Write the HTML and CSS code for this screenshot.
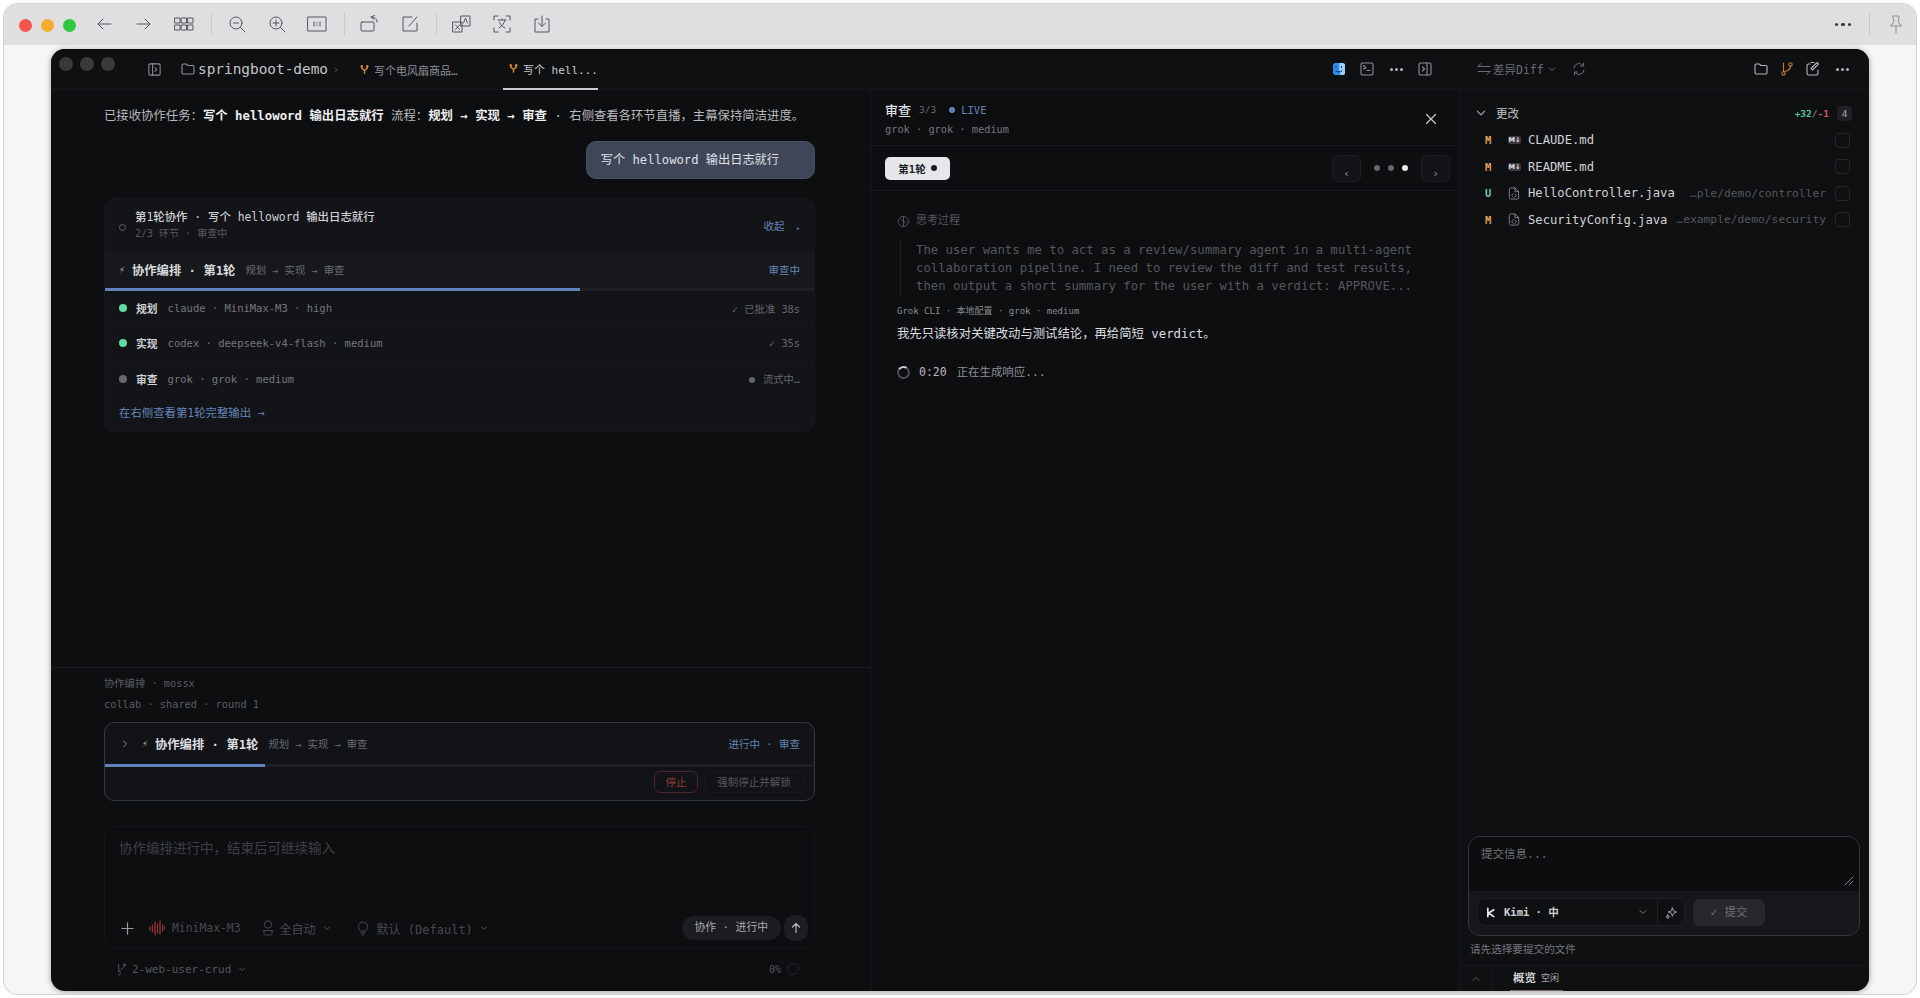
FILE: index.html
```html
<!DOCTYPE html>
<html lang="zh-CN">
<head>
  <meta charset="UTF-8">
  <title>springboot-demo</title>
  <link rel="stylesheet" href="styles.css">
</head>
<body>
  <div class="window">
    <div class="toolbar">
      <span class="light red"></span><span class="light yellow"></span><span class="light green"></span>
      <svg class="tool first" viewBox="0 0 20 20"><path d="M17 10H4M9 5l-5 5 5 5"/></svg>
      <svg class="tool" viewBox="0 0 20 20"><path d="M3 10h13M11 5l5 5-5 5"/></svg>
      <svg class="tool" viewBox="0 0 20 20"><path d="M1 4h5v5H1zM7.500 4h5v5h-5zM14 4h5v5h-5zM1 11h5v5H1zM7.500 11h5v5h-5zM14 11h5v5h-5z"/></svg>
      <span class="tool-sep"></span>
      <svg class="tool" viewBox="0 0 20 20"><circle cx="9" cy="9" r="6"/><path d="M13.500 13.500L18 18M6.500 9h5"/></svg>
      <svg class="tool" viewBox="0 0 20 20"><circle cx="9" cy="9" r="6"/><path d="M13.500 13.500L18 18M6 9h6M9 6v6"/></svg>
      <svg class="tool" viewBox="0 0 20 20"><rect x="1" y="3" width="18" height="14"/><path d="M7 8v4M13 8v4M10 8.500v.5M10 11v.5"/></svg>
      <span class="tool-sep"></span>
      <svg class="tool" viewBox="0 0 20 20"><rect x="1" y="8" width="13" height="9" rx="1"/><path d="M11 3c3 0 6 1 6 5M14.500 1.500L11 3l3 2.500"/></svg>
      <svg class="tool narrow" viewBox="0 0 20 20"><path d="M17 9v8H3V3h9M9 12l8-9"/></svg>
      <span class="tool-sep"></span>
      <svg class="tool" viewBox="0 0 20 20"><rect x="1" y="8" width="9" height="10"/><rect x="9" y="2" width="9" height="10"/><path d="M3.500 11l4 4.500M7.500 11l-4 4.500M11.500 9l2-5 2 5"/></svg>
      <svg class="tool" viewBox="0 0 20 20"><path d="M2 6V2h4M14 2h4v4M18 14v4h-4M6 18H2v-4M6 6h8M10 5v1M7 14c3-2 5-4 6-8M7.500 8c1 3 3 5 5.500 6"/></svg>
      <svg class="tool" viewBox="0 0 20 20"><path d="M6 5H3v13h14V5h-3M10 2v10M6.500 9l3.500 3.500L13.500 9"/></svg>
      <span class="toolbar-gap"></span>
      <span class="tool-dots"><i></i><i></i><i></i></span>
      <span class="tool-sep end"></span>
      <svg class="tool pin" viewBox="0 0 20 20"><path d="M7 2h6l-.7 6 3.200 4H4.500l3.200-4zM10 12v7"/></svg>
    </div>

    <div class="app">
      <div class="main">
        <header class="topbar">
          <span class="dark-light"></span><span class="dark-light"></span><span class="dark-light"></span>
          <svg class="ico sidebar-ico" viewBox="0 0 16 16"><rect x="2" y="2" width="12" height="12" rx="1.500"/><path d="M6 2v12M8.500 6l2 2-2 2"/></svg>
          <svg class="ico folder-ico" viewBox="0 0 16 16"><path d="M2 4.500c0-.8.500-1.500 1.300-1.500h3L8 4.500h5c.6 0 1 .5 1 1v6c0 .8-.5 1.500-1.300 1.500H3.300C2.500 13 2 12.300 2 11.500z"/></svg>
          <span class="project">springboot-demo</span>
          <span class="crumb">›</span>
          <span class="tab">
            <svg class="fork" viewBox="0 0 12 12"><path d="M3 3v1.500L6 7l3-2.500V3M6 7v3"/><circle class="fork-tip" cx="3" cy="2.500" r="1.300"/><circle class="fork-tip" cx="9" cy="2.500" r="1.300"/></svg>
            <span>写个电风扇商品…</span>
          </span>
          <span class="tab active">
            <svg class="fork" viewBox="0 0 12 12"><path d="M3 3v1.500L6 7l3-2.500V3M6 7v3"/><circle class="fork-tip" cx="3" cy="2.500" r="1.300"/><circle class="fork-tip" cx="9" cy="2.500" r="1.300"/></svg>
            <span>写个 hell...</span>
          </span>
          <span class="topbar-gap"></span>
          <svg class="finder" viewBox="0 0 12 12"><rect width="12" height="12" rx="2.500" fill="#2f8cf0"/><path d="M6.500 0H9.500A2.500 2.500 0 0 1 12 2.500v7A2.500 2.500 0 0 1 9.500 12H7.500C6.500 9 6 4 6.500 0z" fill="#9fd0fa"/><path d="M3 3.500v1M8.500 3.500v1M3 8c2 1.300 4 1.300 6 0" stroke="#10335c" fill="none"/></svg>
          <svg class="ico term-ico" viewBox="0 0 16 16"><rect x="2" y="2" width="12" height="12" rx="1.500"/><path d="M4.500 4.500L7 7 4.500 8M8 9.500h3"/></svg>
          <span class="dots top-dots"><i></i><i></i><i></i></span>
          <svg class="ico panel-ico" viewBox="0 0 16 16"><rect x="2" y="2" width="12" height="12" rx="1.500"/><path d="M10 2v12M5.500 6l2 2-2 2"/></svg>
        </header>

        <div class="panes">
          <section class="left">
            <div class="log">
              <p class="notice">已接收协作任务：<b>写个 helloword 输出日志就行</b> 流程：<b>规划 → 实现 → 审查</b> · 右侧查看各环节直播，主幕保持简洁进度。</p>
              <div class="bubble-row"><div class="bubble">写个 helloword 输出日志就行</div></div>

              <div class="card">
                <div class="card-head">
                  <span class="ring"></span>
                  <div class="card-titles">
                    <div class="card-title">第1轮协作 · 写个 helloword 输出日志就行</div>
                    <div class="card-sub">2/3 环节 · 审查中</div>
                  </div>
                  <span class="link-blue collapse">收起 <small>▴</small></span>
                </div>
                <div class="orch">
                  <span class="bolt">⚡︎</span>
                  <b>协作编排 · 第1轮</b>
                  <span class="flow">规划 → 实现 → 审查</span>
                  <span class="link-blue end">审查中</span>
                </div>
                <div class="bar"><div class="bar-fill" style="width: 67%"></div></div>
                <div class="step">
                  <span class="dot ok"></span><b>规划</b><span class="step-meta">claude · MiniMax-M3 · high</span>
                  <span class="step-state">✓ 已批准 38s</span>
                </div>
                <div class="step">
                  <span class="dot ok"></span><b>实现</b><span class="step-meta">codex · deepseek-v4-flash · medium</span>
                  <span class="step-state">✓ 35s</span>
                </div>
                <div class="step last">
                  <span class="dot wait"></span><b>审查</b><span class="step-meta">grok · grok · medium</span>
                  <span class="step-state"><span class="mini-dot"></span> 流式中…</span>
                </div>
                <div class="card-link link-blue">在右侧查看第1轮完整输出 →</div>
              </div>
            </div>

            <div class="lower">
              <div class="lower-meta">协作编排 · mossx</div>
              <div class="lower-meta second">collab · shared · round 1</div>

              <div class="run-box">
                <div class="run-head">
                  <svg class="chev-r" viewBox="0 0 10 10"><path d="M3.500 2l3 3-3 3"/></svg>
                  <span class="bolt">⚡︎</span>
                  <b>协作编排 · 第1轮</b>
                  <span class="flow">规划 → 实现 → 审查</span>
                  <span class="link-blue end">进行中 · 审查</span>
                </div>
                <div class="bar run-bar"><div class="bar-fill" style="width: 22.600%"></div></div>
                <div class="run-actions">
                  <span class="btn-stop">停止</span>
                  <span class="btn-force">强制停止并解锁</span>
                </div>
              </div>

              <div class="composer">
                <div class="placeholder">协作编排进行中，结束后可继续输入</div>
                <div class="composer-bar">
                  <svg class="plus" viewBox="0 0 14 14"><path d="M7 1v12M1 7h12"/></svg>
                  <svg class="wave" viewBox="0 0 16 16"><path d="M1 7v3M3.500 5v7M6 2v13M8.500 4v9M11 1v13M13.500 5v6M15.500 7v2"/></svg>
                  <span class="opt model">MiniMax-M3</span>
                  <svg class="ico-sm robot" viewBox="0 0 14 16"><rect x="3.500" y="1" width="7" height="7" rx="3"/><path d="M2 10.500h10M3 10.500v3c0 1 .5 1.500 1.500 1.500h5c1 0 1.500-.5 1.500-1.500v-3"/></svg>
                  <span class="opt cjk">全自动</span>
                  <svg class="chev-d" viewBox="0 0 10 10"><path d="M2.500 4l2.500 2.500L7.500 4"/></svg>
                  <svg class="ico-sm bulb" viewBox="0 0 14 16"><path d="M4.500 11C3 9.500 2.500 8.500 2.500 6.500a4.500 4.500 0 0 1 9 0c0 2-.5 3-2 4.500zM5 13h4M6 15h2"/></svg>
                  <span class="opt cjk">默认 (Default)</span>
                  <svg class="chev-d" viewBox="0 0 10 10"><path d="M2.500 4l2.500 2.500L7.500 4"/></svg>
                  <span class="composer-gap"></span>
                  <span class="mode">协作 · 进行中</span>
                  <span class="send"><svg viewBox="0 0 12 12"><path d="M6 10.500v-9M2.500 5L6 1.500 9.500 5"/></svg></span>
                </div>
              </div>

              <div class="status">
                <svg class="branch" viewBox="0 0 14 14"><path d="M4 1.500v7M10 1.500c.5 3-1 4.500-5 6M4 9a2 2 0 1 1-.1 4"/><circle cx="10" cy="2" r="1"/></svg>
                <span>2-web-user-crud</span>
                <svg class="chev-d" viewBox="0 0 10 10"><path d="M2.500 4l2.500 2.500L7.500 4"/></svg>
                <span class="status-pct">0%</span>
                <span class="status-ring"></span>
              </div>
            </div>
          </section>

          <section class="mid">
            <div class="mid-head">
              <div>
                <div class="mid-title"><b>审查</b><span class="count">3/3</span><span class="live"><i></i>LIVE</span></div>
                <div class="mid-sub">grok · grok · medium</div>
              </div>
              <svg class="close" viewBox="0 0 12 12"><path d="M1.500 1.500l9 9M10.500 1.500l-9 9"/></svg>
            </div>
            <div class="round-bar">
              <span class="chip">第1轮<i></i></span>
              <span class="nav">‹</span>
              <span class="pager"><i></i><i></i><i class="on"></i></span>
              <span class="nav">›</span>
            </div>
            <div class="stream">
              <div class="think-head">
                <svg viewBox="0 0 14 14"><circle cx="7" cy="7" r="5.500"/><path d="M7 1.500v11M7 7L4.500 5M7 9.500l2.500-2.500"/></svg>
                思考过程
              </div>
              <blockquote class="think">The user wants me to act as a review/summary agent in a multi-agent collaboration pipeline. I need to review the diff and test results, then output a short summary for the user with a verdict: APPROVE...</blockquote>
              <div class="answer-meta">Grok CLI · 本地配置 · grok · medium</div>
              <div class="answer">我先只读核对关键改动与测试结论，再给简短 verdict。</div>
              <div class="progress"><span class="spinner"></span><span class="time">0:20</span><span>正在生成响应...</span></div>
            </div>
          </section>
        </div>
      </div>

      <aside class="right">
        <div class="right-head">
          <svg class="ico-sm swap" viewBox="0 0 14 14"><path d="M1 4.500h12M4 1.500l-3 3M13 9.500H1M10 12.500l3-3"/></svg>
          <span class="diff-label">差异Diff</span>
          <svg class="chev-d" viewBox="0 0 10 10"><path d="M2.500 4l2.500 2.500L7.500 4"/></svg>
          <svg class="ico-sm refresh" viewBox="0 0 14 14"><path d="M2 6a5 5 0 0 1 9-2.500M12 8a5 5 0 0 1-9 2.500M11.500 1v3h-3M2.500 13v-3h3"/></svg>
          <span class="right-gap"></span>
          <svg class="ico folder2" viewBox="0 0 16 16"><path d="M2 4.500c0-.8.500-1.500 1.300-1.500h3L8 4.500h5c.6 0 1 .5 1 1v6c0 .8-.5 1.500-1.300 1.500H3.300C2.500 13 2 12.300 2 11.500z"/></svg>
          <svg class="ico branch2" viewBox="0 0 16 16"><circle cx="4.500" cy="12.500" r="1.700"/><circle cx="11.500" cy="3.500" r="1.700"/><path d="M4.500 2v8.800M11.500 5.200c0 3.500-3 5-7 5.500"/></svg>
          <svg class="ico edit2" viewBox="0 0 16 16"><path d="M5 3H3.500C2.700 3 2 3.700 2 4.500v8c0 .8.700 1.500 1.500 1.500h8c.8 0 1.500-.7 1.500-1.500V9M6 1.500h3M7.500 9l6-6-1.500-1.500-6 6z"/></svg>
          <span class="dots"><i></i><i></i><i></i></span>
        </div>

        <div class="changes">
          <div class="changes-head">
            <svg class="chev-d big" viewBox="0 0 10 10"><path d="M2 3.500L5 6.500 8 3.500"/></svg>
            <span class="changes-title">更改</span>
            <span class="stat"><span class="add">+32</span>/<span class="del">-1</span></span>
            <span class="badge">4</span>
          </div>
          <div class="file"><span class="st m">M</span><span class="md">M↓</span><span class="name">CLAUDE.md</span><span class="box"></span></div>
          <div class="file"><span class="st m">M</span><span class="md">M↓</span><span class="name">README.md</span><span class="box"></span></div>
          <div class="file"><span class="st u">U</span>
            <svg class="doc" viewBox="0 0 12 14"><path d="M1 2.500C1 1.500 1.500 1 2.500 1H7l4 4v6.500c0 1-.5 1.500-1.500 1.500h-7c-1 0-1.500-.5-1.500-1.500zM7 1v4h4M5 7.500L3.500 9.200 5 11M7 7.500l1.500 1.700L7 11"/></svg>
            <span class="name">HelloController.java</span><span class="path">…ple/demo/controller</span><span class="box"></span></div>
          <div class="file"><span class="st m">M</span>
            <svg class="doc" viewBox="0 0 12 14"><path d="M1 2.500C1 1.500 1.500 1 2.500 1H7l4 4v6.500c0 1-.5 1.500-1.500 1.500h-7c-1 0-1.500-.5-1.500-1.500zM7 1v4h4M5 7.500L3.500 9.200 5 11M7 7.500l1.500 1.700L7 11"/></svg>
            <span class="name">SecurityConfig.java</span><span class="path tight">…example/demo/security</span><span class="box"></span></div>
        </div>

        <div class="commit">
          <div class="commit-box">
            <div class="commit-input">
              提交信息...
              <svg class="grip" viewBox="0 0 10 10"><path d="M1 9l8-8M5 9l4-4"/></svg>
            </div>
            <div class="commit-bar">
              <div class="picker">
                <svg class="kimi" viewBox="0 0 12 12"><path d="M2 1.500v9M8.500 3L3 6.500l5.500 4"/></svg>
                <span class="picker-label">Kimi · 中</span>
                <svg class="chev-d" viewBox="0 0 10 10"><path d="M2 3.500L5 6.500 8 3.500"/></svg>
                <span class="spark"><svg viewBox="0 0 14 14"><path d="M8 2l1.200 3.300L12.500 6.500 9.200 7.700 8 11 6.800 7.700 3.500 6.500 6.800 5.300zM3 9.500l.6 1.400 1.400.6-1.400.6L3 13.500l-.6-1.400-1.400-.6 1.400-.6z"/></svg></span>
              </div>
              <span class="commit-btn">✓ 提交</span>
            </div>
          </div>
          <div class="commit-hint">请先选择要提交的文件</div>
        </div>

        <div class="bottom-tabs">
          <span class="collapse-tab"><svg class="chev-d" viewBox="0 0 10 10"><path d="M2 6.500L5 3.500 8 6.500"/></svg></span>
          <span class="bottom-tab"><b>概览</b><small>空闲</small></span>
        </div>
      </aside>
    </div>
  </div>
</body>
</html>
```

FILE: styles.css
```css
* {
  box-sizing: border-box;
}
html, body {
  margin: 0;
  height: 100%;
  overflow: hidden;
}
body {
  background: #ffffff;
  padding: 3px 3px 3px 3px;
  font-family: "DejaVu Sans Mono", "Noto Sans CJK SC", monospace;
  font-size: 12.200px;
  color: #d9dadd;
}
svg {
  fill: none;
  stroke: currentColor;
  stroke-linecap: round;
  stroke-linejoin: round;
  flex: none;
}
b {
  font-weight: 700;
}

/* outer window */
.window {
  height: 992px;
  border: 1px solid #d4d4d6;
  border-radius: 14px;
  background: #f6f6f6;
  overflow: hidden;
}
.toolbar {
  height: 41px;
  background: #dfdfe1;
  display: flex;
  align-items: center;
  padding: 2px 0 0 15px;
  color: #55565a;
}
.light {
  width: 13px;
  height: 13px;
  border-radius: 50%;
  margin-right: 9px;
}
.red { background: #f5534d; }
.yellow { background: #f6ad2d; }
.green { background: #2ec840; }
.tool {
  width: 20px;
  height: 20px;
  stroke-width: 1;
  margin: -3px 20px 0 0;
}
.tool.first {
  margin-left: 9px;
}
.tool.narrow {
  margin-right: 19px;
}
.tool-sep {
  width: 1px;
  height: 22px;
  background: #c9c9cb;
  margin: -3px 15px 0 -3px;
}
.tool-sep.end {
  margin: -3px 16px 0 18px;
}
.toolbar-gap {
  flex: 1;
}
.tool-dots {
  display: flex;
  gap: 3px;
  margin-top: -2px;
}
.tool-dots i {
  width: 3.500px;
  height: 3.500px;
  border-radius: 50%;
  background: #3a3a3d;
}
.tool.pin {
  color: #8e8e92;
  margin-right: 10px;
}

/* dark app */
.app {
  width: 1818px;
  height: 942px;
  margin: 4px 0 0 47px;
  background: #0d0e10;
  border-radius: 14px;
  overflow: hidden;
  display: flex;
  box-shadow: 0 1px 6px rgba(0,0,0,0.35);
}
.main {
  width: 1409px;
  display: flex;
  flex-direction: column;
}
.topbar {
  height: 41px;
  display: flex;
  align-items: center;
  padding-left: 8px;
  border-bottom: 1px solid #17181b;
  color: #8f9196;
  background: #0f1012;
}
.dark-light {
  width: 14px;
  height: 14px;
  border-radius: 50%;
  background: #3a3a3c;
  margin-right: 7px;
  margin-top: -10px;
}
.ico {
  width: 16px;
  height: 16px;
  stroke-width: 1.100;
}
.sidebar-ico {
  margin-left: 25px;
  width: 15px;
  height: 15px;
}
.folder-ico {
  margin-left: 18px;
}
.project {
  font-size: 14.400px;
  color: #c4c5c9;
  margin-left: 2px;
}
.crumb {
  font-size: 10px;
  color: #55575b;
  margin-left: 5px;
}
.tab {
  height: 41px;
  display: flex;
  align-items: center;
  font-size: 11px;
  color: #909297;
  margin-left: 20px;
  padding: 1px 0 0 0;
  width: 122px;
  white-space: nowrap;
}
.tab.active {
  color: #c9cace;
  border-bottom: 2px solid #c9cace;
  width: 95px;
  margin-left: 22px;
  padding-left: 5px;
}
.fork {
  width: 11px;
  height: 11px;
  color: #d58a2c;
  stroke-width: 1.500;
  margin-right: 4px;
}
.fork-tip {
  fill: currentColor;
  stroke: none;
}
.topbar-gap {
  flex: 1;
}
.finder {
  width: 12px;
  height: 12px;
  stroke: none;
}
.term-ico {
  margin-left: 14px;
}
.dots {
  display: flex;
  gap: 2px;
}
.dots i {
  width: 3px;
  height: 3px;
  border-radius: 50%;
  background: #b0b1b5;
}
.top-dots {
  margin-left: 15px;
}
.panel-ico {
  margin: 0 27px 0 14px;
}
.panes {
  flex: 1;
  display: flex;
  min-height: 0;
}

/* left pane */
.left {
  width: 820px;
  display: flex;
  flex-direction: column;
  border-right: 1px solid #1a1b1e;
}
.log {
  height: 578px;
  padding: 17px 55px 0 53px;
  border-bottom: 1px solid #1a1b1e;
}
.notice {
  margin: 0;
  line-height: 18px;
  font-size: 12.370px;
  color: #b8b9bd;
  white-space: nowrap;
}
.notice b {
  color: #eeeef0;
}
.bubble-row {
  display: flex;
  justify-content: flex-end;
  margin-top: 16px;
}
.bubble {
  height: 38px;
  line-height: 36px;
  padding: 0 35px 0 14px;
  background: #3f4658;
  border: 1px solid #4a5164;
  border-radius: 10px;
  color: #dfe1e6;
}
.card {
  margin-top: 19px;
  height: 234px;
  background: #131417;
  border: 1px solid #17181b;
  border-radius: 10px;
  overflow: hidden;
}
.card-head {
  height: 52px;
  display: flex;
  align-items: center;
  padding: 0 14px;
}
.ring {
  width: 7px;
  height: 7px;
  border-radius: 50%;
  border: 1px solid #5f6166;
  margin-right: 9px;
  margin-top: 4px;
}
.card-title {
  font-size: 11.400px;
  line-height: 16px;
  color: #cfd0d4;
  font-weight: 500;
}
.card-sub {
  font-size: 10px;
  line-height: 16px;
  color: #595b60;
  margin-top: 1px;
}
.link-blue {
  color: #6484b8;
  font-size: 10.500px;
}
.collapse {
  margin-left: auto;
  margin-top: 0;
}
.collapse small {
  font-size: 7px;
  margin-left: 5px;
}
.orch {
  height: 37px;
  background: #17181b;
  display: flex;
  align-items: center;
  padding: 0 14px;
  font-size: 12.300px;
  color: #d8d9dc;
}
.bolt {
  width: 13px;
  font-size: 10px;
  color: #a0a2a6;
}
.flow {
  font-size: 10.300px;
  color: #6b6d72;
  margin-left: 10px;
}
.end {
  margin-left: auto;
}
.bar {
  height: 3px;
  background: #1e1f23;
}
.bar-fill {
  height: 100%;
  background: #6183bd;
}
.step {
  height: 35px;
  display: flex;
  align-items: center;
  padding: 0 14px;
  border-bottom: 1px solid #17181b;
  font-size: 10.800px;
  color: #cfd0d4;
}
.step.last {
  border-bottom: none;
}
.dot {
  width: 8px;
  height: 8px;
  border-radius: 50%;
  margin-right: 9px;
}
.dot.ok { background: #5fdca4; }
.dot.wait { background: #66686d; }
.step-meta {
  font-size: 10.500px;
  color: #74767b;
  margin-left: 10px;
}
.step-state {
  margin-left: auto;
  font-size: 10.300px;
  color: #64666b;
}
.mini-dot {
  display: inline-block;
  width: 6px;
  height: 6px;
  border-radius: 50%;
  background: #64666b;
  margin-right: 2px;
}
.card-link {
  padding: 8px 14px 0;
  font-size: 11.400px;
}

.lower {
  flex: 1;
  padding: 7px 55px 0 53px;
}
.lower-meta {
  font-size: 10.300px;
  line-height: 16px;
  color: #5b5d62;
}
.lower-meta.second {
  margin-top: 5px;
}
.run-box {
  margin-top: 10px;
  height: 79px;
  background: #121317;
  border: 1px solid #333945;
  border-radius: 10px;
  overflow: hidden;
}
.run-head {
  height: 41px;
  display: flex;
  align-items: center;
  padding: 0 14px 0 15px;
  font-size: 12.300px;
  color: #dedfe2;
}
.chev-r {
  width: 10px;
  height: 10px;
  stroke-width: 1;
  color: #8c8e93;
  margin-right: 12px;
}
.run-bar {
  height: 3px;
}
.run-actions {
  display: flex;
  justify-content: flex-end;
  gap: 6px;
  padding: 4px 10px 0;
}
.btn-stop, .btn-force {
  height: 22px;
  line-height: 20px;
  font-size: 10.500px;
  border-radius: 6px;
  text-align: center;
}
.btn-stop {
  width: 44px;
  color: #8c3b3e;
  border: 1px solid #4d2529;
}
.btn-force {
  width: 100px;
  color: #54565b;
  border: 1px solid #191a1d;
}
.composer {
  margin-top: 25px;
  height: 122px;
  border: 1px solid #15161a;
  border-radius: 12px;
  padding: 12px 6px 0 14px;
  display: flex;
  flex-direction: column;
}
.placeholder {
  font-size: 13.500px;
  line-height: 18px;
  color: #3d3f44;
}
.composer-bar {
  margin-top: auto;
  height: 26px;
  margin-bottom: 6px;
  padding-left: 2px;
  display: flex;
  align-items: center;
  color: #47494e;
  font-size: 11.400px;
}
.plus {
  width: 13px;
  height: 13px;
  color: #9a9ca0;
  stroke-width: 1.300;
  margin-right: 15px;
}
.wave {
  width: 16px;
  height: 16px;
  color: #8e2f38;
  stroke-width: 1.400;
  margin-right: 7px;
}
.opt {
  white-space: nowrap;
}
.opt.cjk {
  font-size: 12px;
}
.ico-sm {
  width: 14px;
  height: 14px;
  stroke-width: 1;
}
.robot {
  margin: 0 5px 0 20px;
  height: 16px;
}
.bulb {
  margin: 0 7px 0 24px;
  height: 16px;
}
.chev-d {
  width: 10px;
  height: 10px;
  stroke-width: 1;
  margin-left: 6px;
  color: #55575c;
}
.composer-gap {
  flex: 1;
}
.mode {
  height: 24px;
  line-height: 24px;
  padding: 0 13px;
  background: #1c1d20;
  border-radius: 12px;
  font-size: 10.800px;
  color: #a9abaf;
}
.send {
  width: 24px;
  height: 26px;
  margin-left: 3px;
  border-radius: 10px;
  background: #1c1d20;
  color: #b0b2b6;
  display: flex;
  align-items: center;
  justify-content: center;
}
.send svg {
  width: 12px;
  height: 12px;
  stroke-width: 1.200;
}
.status {
  height: 42px;
  display: flex;
  align-items: center;
  padding: 0 16px 0 11px;
  font-size: 11px;
  color: #54565b;
}
.branch {
  width: 13px;
  height: 13px;
  stroke-width: 1;
  margin-right: 4px;
}
.status-pct {
  margin-left: auto;
  font-size: 10px;
}
.status-ring {
  width: 12px;
  height: 12px;
  border-radius: 50%;
  border: 1px solid #26272b;
  margin-left: 6px;
}

/* middle pane */
.mid {
  flex: 1;
  display: flex;
  flex-direction: column;
  border-right: 1px solid #1a1b1e;
}
.mid-head {
  height: 56px;
  display: flex;
  align-items: center;
  justify-content: space-between;
  padding: 3px 22px 0 14px;
  border-bottom: 1px solid #17181b;
}
.mid-title {
  display: flex;
  align-items: center;
  height: 18px;
  margin-top: -3px;
}
.mid-title b {
  font-size: 13px;
  color: #dddee1;
  font-weight: 500;
}
.count {
  font-size: 9.500px;
  color: #6a6c71;
  margin-left: 8px;
}
.live {
  display: flex;
  align-items: center;
  font-size: 10.500px;
  color: #6383b6;
  margin-left: 13px;
}
.live i {
  width: 6px;
  height: 6px;
  border-radius: 50%;
  background: #6383b6;
  margin-right: 6px;
}
.mid-sub {
  font-size: 10.300px;
  color: #74767b;
  margin-top: 4px;
}
.close {
  width: 12px;
  height: 12px;
  color: #c9cacd;
  stroke-width: 1.200;
  margin-top: -1px;
}
.round-bar {
  height: 45px;
  display: flex;
  align-items: center;
  padding: 0 9px 0 14px;
  border-bottom: 1px solid #17181b;
}
.chip {
  width: 65px;
  height: 23px;
  background: #e6e7ea;
  border-radius: 5px;
  color: #1b1c1f;
  font-size: 10.500px;
  font-weight: 700;
  display: flex;
  align-items: center;
  justify-content: center;
  margin-right: auto;
}
.chip i {
  width: 6px;
  height: 6px;
  border-radius: 50%;
  background: #1b1c1f;
  margin-left: 5px;
}
.nav {
  width: 29px;
  height: 27px;
  border: 1px solid #1e1f22;
  border-radius: 6px;
  background: #131417;
  color: #97999d;
  font-size: 11px;
  display: flex;
  align-items: flex-end;
  justify-content: center;
  padding-bottom: 1px;
}
.pager {
  display: flex;
  gap: 8px;
  margin: 0 13px;
}
.pager i {
  width: 6px;
  height: 6px;
  border-radius: 50%;
  background: #65676c;
}
.pager i.on {
  background: #e8e9eb;
}
.stream {
  padding: 22px 26px 0 26px;
}
.think-head {
  display: flex;
  align-items: center;
  gap: 6px;
  font-size: 11px;
  color: #55575c;
  line-height: 16px;
}
.think-head svg {
  width: 13px;
  height: 13px;
  stroke-width: 1;
}
.think {
  margin: 12px 0 0 3px;
  padding: 0 0 0 15px;
  border-left: 1px solid #1e1f22;
  color: #55575c;
  line-height: 18px;
  font-size: 12.300px;
  width: 532px;
  height: 56px;
}
.answer-meta {
  margin-top: 6px;
  font-size: 9px;
  line-height: 16px;
  color: #8a8c91;
}
.answer {
  margin-top: 6px;
  line-height: 18px;
  font-size: 12.350px;
  color: #dcdde0;
}
.progress {
  margin-top: 20px;
  display: flex;
  align-items: center;
  color: #8d8f94;
  font-size: 11.400px;
  line-height: 18px;
}
.spinner {
  width: 13px;
  height: 13px;
  border-radius: 50%;
  border: 2px solid #4a4c51;
  border-top-color: #c9cace;
  margin-right: 3px;
  transform: rotate(-10deg);
}
.time {
  font-size: 11.500px;
  color: #b9babe;
  margin: 0 10px 0 6px;
}

/* right pane */
.right {
  flex: 1;
  display: flex;
  flex-direction: column;
  background: #0f1012;
}
.right-head {
  height: 41px;
  display: flex;
  align-items: center;
  padding: 0 20px 0 17px;
  border-bottom: 1px solid #17181b;
  color: #6b6d72;
}
.right-head .chev-d {
  margin-left: 3px;
  color: #6b6d72;
}
.swap {
  margin-right: 2px;
}
.diff-label {
  font-size: 11.500px;
}
.refresh {
  margin-left: 15px;
}
.right-gap {
  flex: 1;
}
.folder2 {
  color: #b5b6ba;
}
.branch2 {
  color: #c27a2e;
  margin-left: 10px;
}
.edit2 {
  color: #b5b6ba;
  margin-left: 10px;
}
.right-head .dots {
  margin-left: 15px;
}
.changes {
  padding: 11px 17px 0 15px;
  flex: 1;
}
.changes-head {
  height: 24px;
  display: flex;
  align-items: center;
  margin-bottom: 2px;
}
.chev-d.big {
  width: 12px;
  height: 12px;
  margin: 0;
  color: #a5a7ab;
}
.changes-title {
  font-size: 11.500px;
  color: #c4c5c9;
  margin-left: 9px;
}
.stat {
  margin-left: auto;
  font-size: 9.500px;
  font-weight: 700;
  color: #75777c;
}
.add { color: #58c796; }
.del { color: #d6505c; }
.badge {
  width: 15px;
  height: 15px;
  line-height: 15px;
  text-align: center;
  margin-left: 8px;
  background: #202125;
  border-radius: 4px;
  font-size: 9.500px;
  color: #a5a7ab;
}
.file {
  height: 26.500px;
  display: flex;
  align-items: center;
  white-space: nowrap;
  color: #d2d3d6;
  padding-right: 2px;
}
.st {
  width: 8px;
  font-size: 10.500px;
  font-weight: 700;
  margin-left: 10px;
}
.st.m { color: #e3a15c; }
.st.u { color: #74c3a6; }
.md {
  width: 13px;
  height: 8px;
  line-height: 8px;
  margin-left: 15px;
  margin-right: 7px;
  border-radius: 2px;
  background: #3a3b3f;
  font-family: "DejaVu Sans", sans-serif;
  font-size: 6.500px;
  font-weight: 700;
  text-align: center;
  color: #e6e7e9;
}
.doc {
  width: 12px;
  height: 13px;
  color: #9a9ca1;
  stroke-width: 0.800;
  margin-left: 15px;
  margin-right: 8px;
}
.path {
  font-size: 11.300px;
  color: #55575c;
  margin-left: auto;
}
.box {
  width: 15px;
  height: 15px;
  border: 1px solid #26272b;
  border-radius: 4px;
  margin-left: 9px;
}
.file > .name + .box {
  margin-left: auto;
}
.commit {
  padding: 0 9px 0 8px;
}
.commit-box {
  height: 100px;
  border: 1px solid #35363a;
  border-radius: 12px;
  overflow: hidden;
  background: #16171a;
}
.commit-input {
  height: 54px;
  background: #0c0d0f;
  padding: 9px 12px;
  font-size: 11.500px;
  line-height: 16px;
  color: #6f7176;
  display: flex;
  justify-content: space-between;
}
.grip {
  width: 10px;
  height: 10px;
  align-self: flex-end;
  margin: 0 -7px -4px 0;
  color: #7d7f84;
}
.commit-bar {
  display: flex;
  align-items: center;
  padding: 7px 8px 0;
}
.picker {
  width: 208px;
  height: 28px;
  background: #0f1012;
  border: 1px solid #202125;
  border-radius: 9px;
  display: flex;
  align-items: center;
  padding-left: 8px;
}
.kimi {
  width: 11px;
  height: 11px;
  color: #e8e9eb;
  stroke-width: 1.800;
}
.picker-label {
  font-size: 10.500px;
  font-weight: 700;
  color: #d0d1d4;
  margin-left: 7px;
  margin-top: -2px;
}
.picker .chev-d {
  margin-left: auto;
  margin-right: 9px;
  color: #77797e;
}
.spark {
  width: 27px;
  height: 26px;
  border-left: 1px solid #202125;
  color: #a5a7ab;
  display: flex;
  align-items: center;
  justify-content: center;
}
.spark svg {
  width: 13px;
  height: 13px;
  stroke-width: 1;
}
.commit-btn {
  width: 72px;
  height: 27px;
  line-height: 26px;
  margin-left: 8px;
  text-align: center;
  border-radius: 7px;
  background: #27282c;
  color: #6d6f74;
  font-size: 11.500px;
}
.commit-hint {
  padding: 5px 0 0 2px;
  font-size: 10.600px;
  line-height: 16px;
  color: #76787d;
  height: 29px;
}
.bottom-tabs {
  height: 26px;
  display: flex;
  border-top: 1px solid #17181b;
}
.collapse-tab {
  width: 32px;
  border-right: 1px solid #17181b;
  display: flex;
  align-items: center;
  justify-content: center;
}
.collapse-tab .chev-d {
  margin: 0;
}
.bottom-tab {
  margin-left: 18px;
  padding: 0 0 2px 3px;
  width: 53px;
  display: flex;
  align-items: center;
  gap: 5px;
  border-bottom: 1px solid #7a6a68;
  font-size: 11.500px;
  color: #cfd0d4;
}
.bottom-tab small {
  font-size: 9px;
  color: #a5a7ab;
}
```
